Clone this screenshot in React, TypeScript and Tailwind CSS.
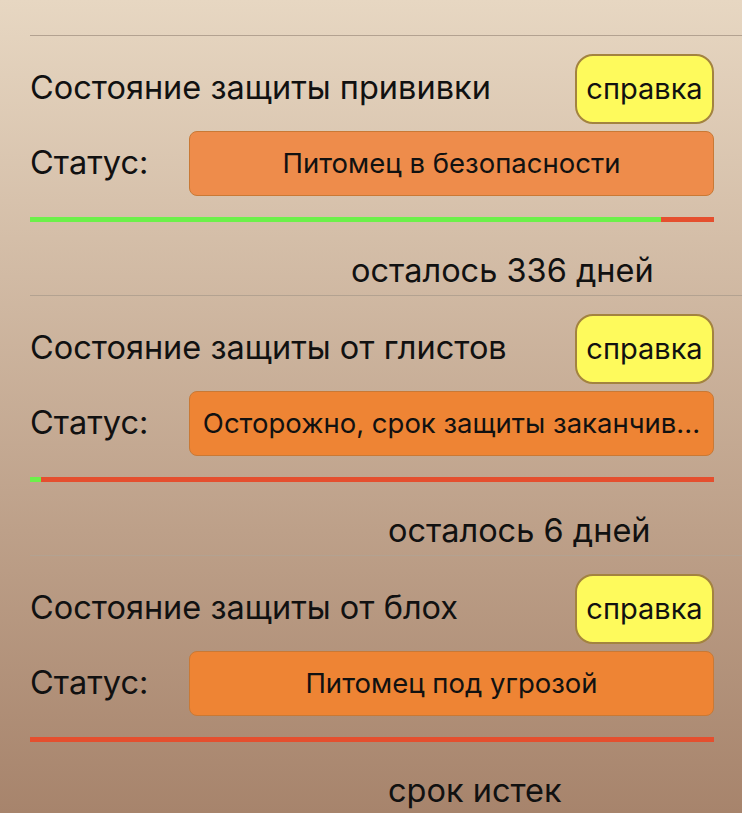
import React from "react";

interface Protection {
    title: string;
    status: string;
    statusBg: string;
    percent: number;
    remaining: string;
    remainingPad: string;
}

const items: Protection[] = [
    {
        title: "Состояние защиты прививки",
        status: "Питомец в безопасности",
        statusBg: "bg-[#ee8c4b]",
        percent: 92.2,
        remaining: "осталось 336 дней",
        remainingPad: "pl-[321px]",
    },
    {
        title: "Состояние защиты от глистов",
        status: "Осторожно, срок защиты заканчив...",
        statusBg: "bg-[#ee8434]",
        percent: 1.6,
        remaining: "осталось 6 дней",
        remainingPad: "pl-[358px]",
    },
    {
        title: "Состояние защиты от блох",
        status: "Питомец под угрозой",
        statusBg: "bg-[#ee8434]",
        percent: 0,
        remaining: "срок истек",
        remainingPad: "pl-[358px]",
    },
];

function ProtectionCard({ item }: { item: Protection }) {
    return (
        <div className="ml-[30px] border-t border-[#b3a291] pr-[28px] pb-[6px]">
            <div className="mt-[18px] flex h-[70px] items-center justify-between">
                <p className="-mt-[1px] text-[32.5px] leading-none text-[#111]">{item.title}</p>
                <button className="h-[70px] w-[139px] rounded-[18px] border-2 border-[#a3833f] bg-[#fefa5c] text-[29px] text-[#111]">
                    справка
                </button>
            </div>

            <div className="mt-[7px] flex h-[65px] items-center">
                <p className="w-[159px] text-[32.5px] leading-none text-[#111]">Статус:</p>
                <div
                    className={`flex h-full flex-1 items-center justify-center rounded-[8px] border-[1.5px] border-[#c97935] text-[27.5px] text-[#111] ${item.statusBg}`}
                >
                    {item.status}
                </div>
            </div>

            <div className="mt-[21px] flex h-[5px] bg-[#e54f2e]">
                <div className="h-full bg-[#6cf04a]" style={{ width: `${item.percent}%` }} />
            </div>

            <p className={`mt-[31px] h-[36px] text-[32.5px] leading-[36px] text-[#111] ${item.remainingPad}`}>
                {item.remaining}
            </p>
        </div>
    );
}

export default function App() {
    return (
        <div
            className="h-[813px] overflow-hidden bg-gradient-to-b from-[#e7d7c2] to-[#a7846c] pt-[35px]"
            style={{ fontFamily: "Inter, 'Noto Sans', sans-serif" }}
        >
            {items.map((item) => (
                <ProtectionCard key={item.title} item={item} />
            ))}
        </div>
    );
}
